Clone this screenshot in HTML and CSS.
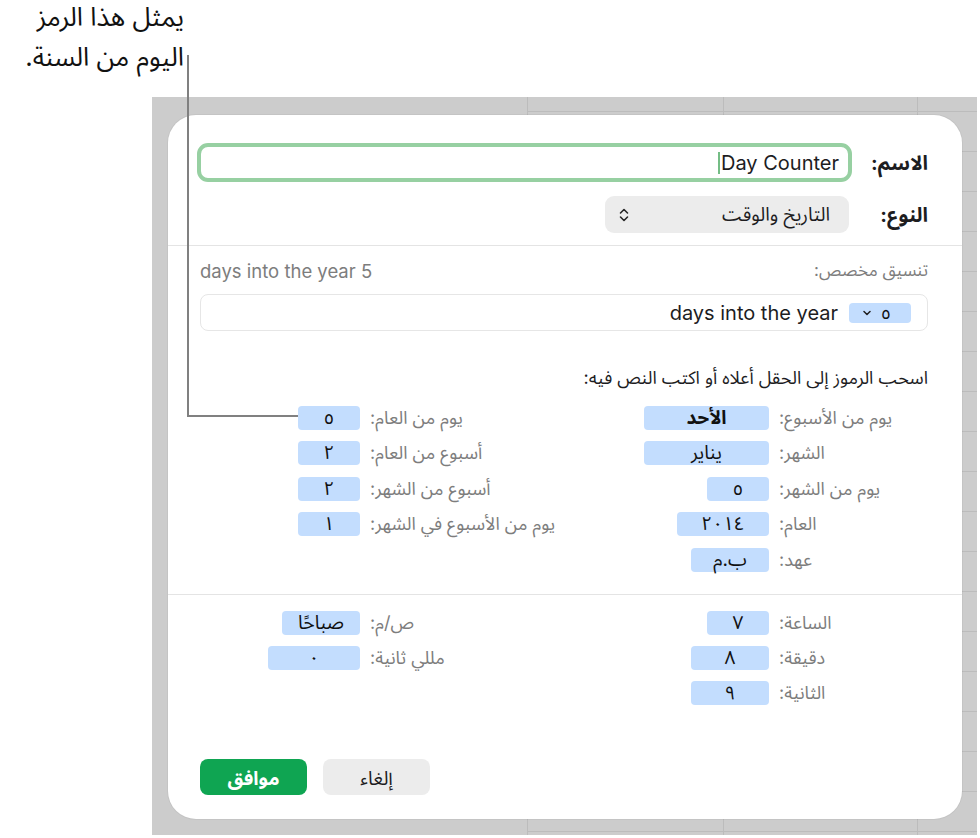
FILE: index.html
```html
<!DOCTYPE html>
<html lang="ar">
<head>
    <meta charset="UTF-8">
    <meta name="viewport" content="width=device-width, initial-scale=1.0">
    <title>تنسيق مخصص</title>
    <link rel="stylesheet" href="styles.css">
</head>
<body>
    <div class="page">
        <p class="callout" dir="rtl">يمثل هذا الرمز<br>اليوم من السنة.</p>
        <div class="leader"></div>

        <div class="sheet">
            <div class="dialog" dir="rtl">
                <div class="section head">
                    <div class="field-row">
                        <span class="field-label">الاسم:</span>
                        <div class="name-input">
                            <span class="name-text" dir="ltr">Day Counter</span>
                            <span class="caret"></span>
                        </div>
                    </div>
                    <div class="field-row">
                        <span class="field-label">النوع:</span>
                        <div class="popup">
                            <span>التاريخ والوقت</span>
                            <svg class="updown" width="10" height="16" viewBox="0 0 10 16">
                                <path d="M1.5 6 L5 2.5 L8.5 6 M1.5 10 L5 13.5 L8.5 10" fill="none" stroke="#262626" stroke-width="1.6" stroke-linecap="round" stroke-linejoin="round"/>
                            </svg>
                        </div>
                    </div>
                </div>

                <div class="section format">
                    <div class="format-head">
                        <span class="muted">تنسيق مخصص:</span>
                        <span class="preview" dir="ltr">days into the year 5</span>
                    </div>
                    <div class="format-field">
                        <span class="token pick">
                            <span>٥</span>
                            <svg width="8" height="6" viewBox="0 0 8 6">
                                <path d="M1 1.5 L4 4.5 L7 1.5" fill="none" stroke="#222" stroke-width="1.5" stroke-linecap="round" stroke-linejoin="round"/>
                            </svg>
                        </span>
                        <span class="format-text" dir="ltr">days into the year</span>
                    </div>

                    <p class="hint">اسحب الرموز إلى الحقل أعلاه أو اكتب النص فيه:</p>

                    <div class="tokens">
                        <span class="tk-label">يوم من الأسبوع:</span>
                        <span class="token xl bold">الأحد</span>
                        <span class="tk-label">يوم من العام:</span>
                        <span class="token s">٥</span>

                        <span class="tk-label">الشهر:</span>
                        <span class="token xl">يناير</span>
                        <span class="tk-label">أسبوع من العام:</span>
                        <span class="token s">٢</span>

                        <span class="tk-label">يوم من الشهر:</span>
                        <span class="token s">٥</span>
                        <span class="tk-label">أسبوع من الشهر:</span>
                        <span class="token s">٢</span>

                        <span class="tk-label">العام:</span>
                        <span class="token l">٢٠١٤</span>
                        <span class="tk-label">يوم من الأسبوع في الشهر:</span>
                        <span class="token s">١</span>

                        <span class="tk-label">عهد:</span>
                        <span class="token m">ب.م</span>
                    </div>
                </div>

                <div class="section time">
                    <div class="tokens">
                        <span class="tk-label">الساعة:</span>
                        <span class="token s">٧</span>
                        <span class="tk-label">ص/م:</span>
                        <span class="token m">صباحًا</span>

                        <span class="tk-label">دقيقة:</span>
                        <span class="token m">٨</span>
                        <span class="tk-label">مللي ثانية:</span>
                        <span class="token l">٠</span>

                        <span class="tk-label">الثانية:</span>
                        <span class="token m">٩</span>
                    </div>

                    <div class="buttons">
                        <button class="btn cancel">إلغاء</button>
                        <button class="btn ok">موافق</button>
                    </div>
                </div>
            </div>
        </div>
    </div>
</body>
</html>
```

FILE: styles.css
```css
* {
    margin: 0;
    padding: 0;
    box-sizing: border-box;
}

body {
    background: #fff;
    font-family: Inter, "Noto Sans Arabic", "DejaVu Sans", sans-serif;
    color: #1d1d1f;
}

.page {
    position: relative;
    width: 980px;
    height: 838px;
}

/* annotation above the sheet */
.callout {
    width: 184px;
    height: 97px;
    margin-top: -3px;
    font-size: 26px;
    line-height: 40px;
    text-align: right;
    color: #111;
}

.leader {
    position: absolute;
    left: 187px;
    top: 58px;
    width: 111px;
    height: 362px;
    border-left: 2px solid #808080;
    border-bottom: 2px solid #808080;
    z-index: 2;
}

/* spreadsheet behind the dialog */
.sheet {
    width: 825px;
    height: 739px;
    margin-left: 152px;
    margin-top: 3px;
    padding: 18px 15px 17px 16px;
    background-color: #cccccc;
    background-image:
        repeating-linear-gradient(to bottom, transparent 0 14px, #bcbcbc 14px 15px, transparent 15px 40px),
        linear-gradient(to right, transparent 375px, #bcbcbc 375px 376px, transparent 376px 571px, #bcbcbc 571px 572px, transparent 572px 765px, #bcbcbc 765px 766px, transparent 766px);
    background-position: 375px 0, 0 0;
    background-size: 450px 100%, 100% 100%;
    background-repeat: no-repeat;
}

.dialog {
    width: 794px;
    height: 704px;
    background: #fff;
    border-radius: 28px;
    display: flex;
    flex-direction: column;
    box-shadow: 0 0 0 1px rgba(0, 0, 0, 0.04);
}

.section {
    padding: 0 34px 0 32px;
}

.head {
    padding-top: 28px;
    padding-bottom: 12px;
    border-bottom: 1px solid #e4e4e4;
    display: flex;
    flex-direction: column;
    gap: 14px;
}

.field-row {
    display: flex;
    align-items: center;
}

.field-label {
    width: 76px;
    flex-shrink: 0;
    font-size: 20px;
    line-height: 24px;
    font-weight: bold;
}

.name-input {
    flex: 1;
    height: 39px;
    margin-left: -3px;
    border: 4px solid #97d0a2;
    border-radius: 11px;
    display: flex;
    align-items: center;
    padding-right: 9px;
}

.name-text {
    font-size: 20px;
    line-height: 24px;
    color: #1d1d1f;
}

.caret {
    width: 2px;
    height: 22px;
    margin-right: 1px;
    background: #74bd85;
}

.popup {
    width: 244px;
    height: 37px;
    margin-right: 3px;
    background: #ececec;
    border-radius: 9px;
    display: flex;
    align-items: center;
    justify-content: space-between;
    padding: 0 19px 0 14px;
    font-size: 19px;
    line-height: 24px;
}

.updown {
    display: block;
}

.format {
    padding-top: 15px;
    padding-bottom: 22px;
    border-bottom: 1px solid #e4e4e4;
}

.format-head {
    display: flex;
    justify-content: space-between;
    align-items: center;
    height: 20px;
}

.muted {
    font-size: 17px;
    color: #7d7d7d;
}

.preview {
    font-size: 18.5px;
    color: #7d7d7d;
}

.format-field {
    margin-top: 13px;
    height: 37px;
    border: 1px solid #e6e6e6;
    border-radius: 8px;
    display: flex;
    align-items: center;
    padding-right: 16px;
    gap: 11px;
}

.format-text {
    font-size: 20px;
    line-height: 24px;
}

.hint {
    margin-top: 37px;
    height: 20px;
    line-height: 20px;
    font-size: 18px;
    color: #1d1d1f;
}

.tokens {
    display: grid;
    grid-template-columns: 149px 130px 259px 90px;
    grid-auto-rows: 24px;
    column-gap: 10px;
    row-gap: 11.4px;
    align-items: center;
    margin-top: 18px;
}

.time .tokens {
    margin-top: 16px;
}

.tk-label {
    justify-self: end;
    font-size: 18px;
    line-height: 24px;
    color: #7d7d7d;
    white-space: nowrap;
}

.token {
    justify-self: start;
    height: 24px;
    background: #c3ddfe;
    border-radius: 4px;
    display: flex;
    align-items: center;
    justify-content: center;
    font-size: 19px;
    color: #111;
}

.token.bold {
    font-weight: bold;
}

.token.s { width: 62px; }
.token.m { width: 78px; }
.token.l { width: 92px; }
.token.xl { width: 125px; }

.token.pick {
    width: 62px;
    height: 20px;
    gap: 10px;
    justify-content: flex-start;
    padding-right: 20px;
    font-size: 18px;
}

.time {
    flex: 1;
    display: flex;
    flex-direction: column;
    padding-bottom: 24px;
}

.buttons {
    margin-top: auto;
    display: flex;
    justify-content: flex-end;
    gap: 16px;
}

.btn {
    width: 107px;
    height: 36px;
    border: none;
    border-radius: 8px;
    font-family: inherit;
    font-size: 19px;
    font-weight: bold;
    cursor: pointer;
}

.cancel {
    background: #ececec;
    color: #1d1d1f;
    font-weight: normal;
}

.ok {
    background: #0fa552;
    color: #fff;
}
```
